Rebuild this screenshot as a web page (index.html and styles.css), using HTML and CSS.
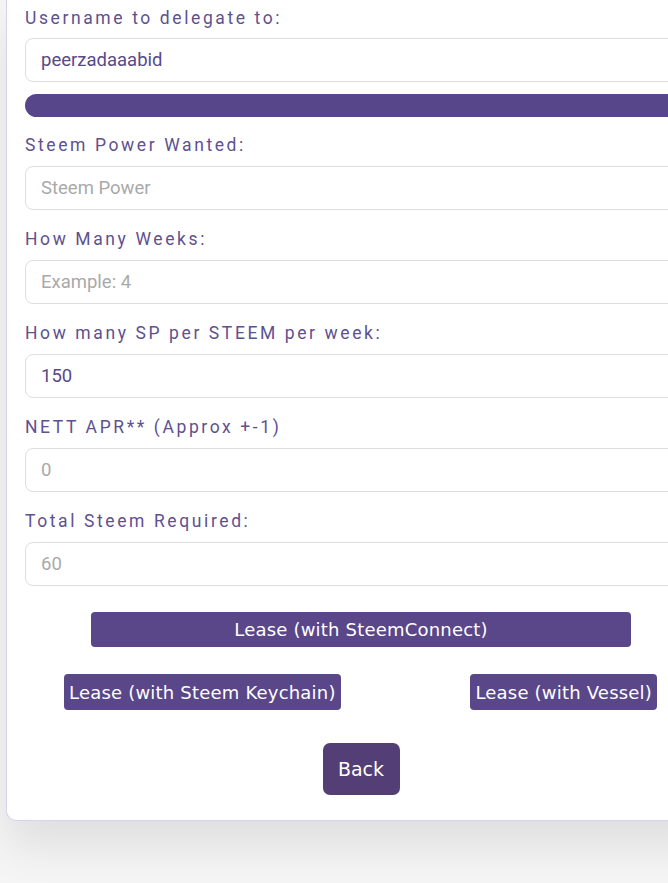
FILE: index.html
```html
<!DOCTYPE html>
<html>
<head>
<meta charset="utf-8">
<link rel="stylesheet" href="styles.css">
</head>
<body>
<div class="card">
  <div class="field">
    <label class="lbl">Username to delegate to:</label>
    <div class="input value">peerzadaaabid</div>
  </div>
  <div class="bar"></div>
  <div class="field">
    <label class="lbl">Steem Power Wanted:</label>
    <div class="input ph">Steem Power</div>
  </div>
  <div class="field">
    <label class="lbl">How Many Weeks:</label>
    <div class="input ph">Example: 4</div>
  </div>
  <div class="field">
    <label class="lbl">How many SP per STEEM per week:</label>
    <div class="input value">150</div>
  </div>
  <div class="field">
    <label class="lbl">NETT APR** (Approx +-1)</label>
    <div class="input ph">0</div>
  </div>
  <div class="field">
    <label class="lbl">Total Steem Required:</label>
    <div class="input ph">60</div>
  </div>
  <div class="row-center">
    <button class="btn btn-wide">Lease (with SteemConnect)</button>
  </div>
  <div class="row-split">
    <button class="btn">Lease (with Steem Keychain)</button>
    <button class="btn">Lease (with Vessel)</button>
  </div>
  <div class="row-center">
    <button class="btn-back">Back</button>
  </div>
</div>
</body>
</html>
```

FILE: styles.css
```css
html, body {
  margin: 0;
  padding: 0;
}
body {
  background: #f5f5f5;
  width: 668px;
  height: 883px;
  overflow: hidden;
  font-family: Roboto, "Liberation Sans", sans-serif;
}
.card {
  margin-left: 6px;
  width: 710px;
  background: #fff;
  border: 1px solid #d6d2ec;
  border-top: 0;
  border-radius: 0 0 10px 10px;
  padding: 6px 18px 25px 18px;
  box-shadow: 0 26px 44px rgba(0, 0, 0, 0.09);
  box-sizing: border-box;
}
.field {
  display: flex;
  flex-direction: column;
}
.field + .field {
  margin-top: 17px;
}
.bar + .field {
  margin-top: 16px;
}
.lbl {
  font-size: 17.5px;
  line-height: 24px;
  letter-spacing: 2.6px;
  color: #5e5190;
  margin-bottom: 8px;
}
.bar + .field .lbl, .field + .field .lbl {
  margin-bottom: 9px;
}
.input {
  height: 44px;
  box-sizing: border-box;
  border: 1px solid #dedede;
  border-radius: 8px;
  padding: 0 15px;
  display: flex;
  align-items: center;
  font-size: 18.5px;
}
.value { color: #574a88; }
.ph { color: #a9a9a9; }
.bar {
  margin-top: 12px;
  height: 23px;
  border-radius: 12px;
  background: #58468a;
}
.row-center {
  display: flex;
  justify-content: center;
}
.row-split {
  display: flex;
  justify-content: space-between;
  padding: 0 40px 0 39px;
  margin-top: 27px;
}
.btn {
  background: #594789;
  color: #fff;
  border: 0;
  border-radius: 4px;
  font-family: "DejaVu Sans", sans-serif;
  font-size: 18px;
  letter-spacing: 0.2px;
  height: 36px;
  padding: 0 5px;
  white-space: nowrap;
}
.btn-wide {
  width: 540px;
  height: 35px;
  margin-top: 26px;
}
.btn-back {
  margin-top: 33px;
  width: 77px;
  height: 52px;
  border: 0;
  border-radius: 7px;
  background: #533f75;
  color: #fff;
  font-family: "DejaVu Sans", sans-serif;
  font-size: 19px;
}
```
